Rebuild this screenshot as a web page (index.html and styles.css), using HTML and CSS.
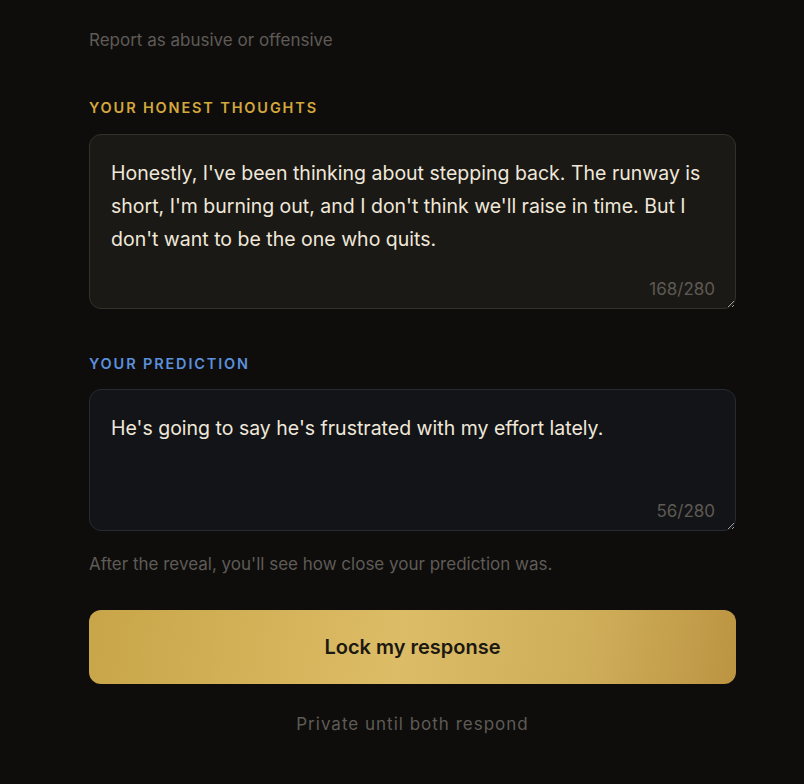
FILE: index.html
```html
<!DOCTYPE html>
<html lang="en">
<head>
<meta charset="utf-8">
<title>Respond</title>
<link rel="stylesheet" href="styles.css">
</head>
<body>
<main class="wrap">
  <a class="report" href="#">Report as abusive or offensive</a>

  <section class="field">
    <label class="label label-gold" for="thoughts">YOUR HONEST THOUGHTS</label>
    <div class="box">
      <textarea id="thoughts" class="input input-warm" maxlength="280">Honestly, I've been thinking about stepping back. The runway is short, I'm burning out, and I don't think we'll raise in time. But I don't want to be the one who quits.</textarea>
      <span class="count">168/280</span>
    </div>
  </section>

  <section class="field">
    <label class="label label-blue" for="prediction">YOUR PREDICTION</label>
    <div class="box">
      <textarea id="prediction" class="input input-cool input-short" maxlength="280">He's going to say he's frustrated with my effort lately.</textarea>
      <span class="count">56/280</span>
    </div>
    <p class="hint">After the reveal, you'll see how close your prediction was.</p>
  </section>

  <button class="lock" type="button">Lock my response</button>
  <p class="private">Private until both respond</p>
</main>
</body>
</html>
```

FILE: styles.css
```css
html, body {
  margin: 0;
  padding: 0;
  background: #0e0d0c;
}
body {
  font-family: "Inter", "Noto Sans", "Liberation Sans", sans-serif;
  color: #ece6da;
  height: 784px;
  overflow: hidden;
}
.wrap {
  width: 647px;
  margin-left: 89px;
  padding-top: 29px;
  display: flex;
  flex-direction: column;
}
.report {
  font-size: 17px;
  line-height: 22px;
  color: #5f5b56;
  text-decoration: none;
}
.field {
  display: flex;
  flex-direction: column;
}
.field:first-of-type {
  margin-top: 48px;
}
.field + .field {
  margin-top: 46px;
}
.label {
  font-size: 14.5px;
  line-height: 18px;
  font-weight: 600;
  letter-spacing: 1.85px;
  margin-bottom: 16.5px;
}
.label-gold { color: #d4a83c; }
.label-blue { color: #5b90dc; }
.box {
  position: relative;
}
.input {
  display: block;
  box-sizing: border-box;
  width: 100%;
  height: 175px;
  margin: 0;
  padding: 22px 21px;
  border-radius: 12px;
  font-family: inherit;
  font-size: 19.5px;
  line-height: 33px;
  color: #efe8da;
  outline: none;
  resize: vertical;
}
.input-warm {
  background: #1b1915;
  border: 1px solid #35312a;
}
.input-cool {
  background: #131417;
  border: 1px solid #262a31;
}
.input-short {
  height: 142px;
}
.count {
  position: absolute;
  right: 21px;
  bottom: 10px;
  font-size: 17px;
  line-height: 20px;
  color: #5e5a54;
}
.hint {
  margin: 22px 0 0;
  font-size: 17px;
  line-height: 22px;
  color: #5f5b56;
}
.lock {
  margin-top: 35px;
  height: 74px;
  border: 0;
  border-radius: 12px;
  background: linear-gradient(100deg, #c8a548 0%, #dcbc66 48%, #cfae5a 76%, #bc9442 100%);
  font-family: inherit;
  font-size: 20px;
  font-weight: 600;
  color: #1c1812;
  cursor: pointer;
}
.private {
  margin: 29px 0 0;
  text-align: center;
  font-size: 17px;
  line-height: 22px;
  letter-spacing: 1px;
  color: #5f5b56;
}
```
